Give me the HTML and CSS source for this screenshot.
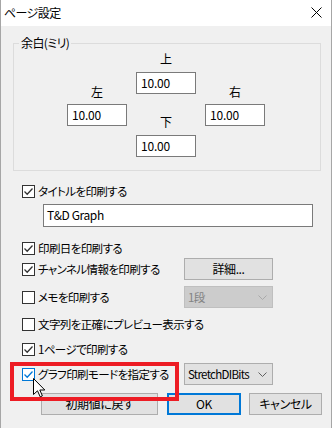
FILE: index.html
```html
<!DOCTYPE html>
<html lang="ja">
<head>
<meta charset="utf-8">
<title>ページ設定</title>
<link rel="stylesheet" href="styles.css">
</head>
<body>
<div class="window">
  <div class="titlebar">
    <span class="title">ページ設定</span>
    <svg class="close" width="11" height="11" viewBox="0 0 11 11"><path d="M0.5 0.5 L10.5 10.5 M10.5 0.5 L0.5 10.5" stroke="#000" stroke-width="1" fill="none"/></svg>
  </div>
  <div class="content">
    <fieldset class="group">
      <legend>余白(ミリ)</legend>
      <div class="margins">
        <div class="col side"><span class="lbl">左</span><div class="field">10.00</div></div>
        <div class="col mid"><span class="lbl">上</span><div class="field">10.00</div><span class="lbl lbl-low">下</span><div class="field">10.00</div></div>
        <div class="col side"><span class="lbl">右</span><div class="field">10.00</div></div>
      </div>
    </fieldset>

    <div class="row r-title"><span class="cb checked"><svg viewBox="0 0 11 11"><path d="M1.5 5.5 L4.2 8.2 L9.5 2.5" /></svg></span><span class="txt">タイトルを印刷する</span></div>
    <div class="textbox">T&amp;D Graph</div>
    <div class="row r-date"><span class="cb checked"><svg viewBox="0 0 11 11"><path d="M1.5 5.5 L4.2 8.2 L9.5 2.5" /></svg></span><span class="txt">印刷日を印刷する</span></div>
    <div class="row wide r-ch"><div class="lab"><span class="cb checked"><svg viewBox="0 0 11 11"><path d="M1.5 5.5 L4.2 8.2 L9.5 2.5" /></svg></span><span class="txt">チャンネル情報を印刷する</span></div><div class="btn detail">詳細...</div></div>
    <div class="row wide r-memo"><div class="lab"><span class="cb"></span><span class="txt">メモを印刷する</span></div><div class="select disabled"><span>1段</span><svg class="chev" width="9" height="5" viewBox="0 0 9 5"><path d="M0.5 0.5 L4.5 4.5 L8.5 0.5"/></svg></div></div>
    <div class="row r-prev"><span class="cb"></span><span class="txt">文字列を正確にプレビュー表示する</span></div>
    <div class="row r-one"><span class="cb checked"><svg viewBox="0 0 11 11"><path d="M1.5 5.5 L4.2 8.2 L9.5 2.5" /></svg></span><span class="txt">1ページで印刷する</span></div>
    <div class="row wide r-graph"><div class="lab"><span class="cb checked hover"><svg viewBox="0 0 11 11"><path d="M1.5 5.5 L4.2 8.2 L9.5 2.5" /></svg></span><span class="txt">グラフ印刷モードを指定する</span></div><div class="select"><span>StretchDIBits</span><svg class="chev" width="9" height="5" viewBox="0 0 9 5"><path d="M0.5 0.5 L4.5 4.5 L8.5 0.5"/></svg></div></div>
    <div class="buttons">
      <div class="btn reset">初期値に戻す</div>
      <div class="btn ok">OK</div>
      <div class="btn cancel">キャンセル</div>
    </div>
  </div>
  <div class="highlight"></div>
  <svg class="cursor" width="13" height="20" viewBox="0 0 13 20"><path d="M0.5 0.5 L0.5 16.5 L4.5 12.8 L7.2 18.8 L9.4 17.8 L6.8 12 L11.8 12 Z" fill="#fff" stroke="#000" stroke-width="1" stroke-linejoin="miter"/></svg>
</div>
</body>
</html>
```

FILE: styles.css
```css
* { box-sizing: border-box; }
html, body { margin: 0; padding: 0; }
body {
  font-family: "Noto Sans CJK JP", "Noto Sans", sans-serif;
  font-size: 11.5px;
  letter-spacing: -0.6px;
  font-feature-settings: "palt";
  color: #000;
  background: #f0f0f0;
}
.window {
  position: relative;
  width: 332px;
  height: 428px;
  border-left: 1px solid #a6a6a6;
  border-right: 1px solid #a6a6a6;
  display: flex;
  flex-direction: column;
  overflow: hidden;
}
.titlebar {
  height: 26px;
  background: #fff;
  display: flex;
  align-items: center;
  justify-content: space-between;
  padding: 0 9px 1px 3px;
  flex: none;
}
.title { line-height: 14px; font-size: 12px; }
.close { display: block; margin-top: -1px; }
.content {
  flex: 1;
  background: #f0f0f0;
  display: flex;
  flex-direction: column;
}
.group {
  margin: 10px 10px 0 12px;
  padding: 2px 0 13px 0;
  border: 1px solid #dcdcdc;
  min-width: 0;
}
.group legend {
  margin-left: 5px;
  padding: 0 2px;
  line-height: 14px;
  font-size: 12px;
}
.margins {
  display: flex;
  gap: 9px;
  padding-left: 53px;
}
.col { display: flex; flex-direction: column; width: 60px; }
.side { padding-top: 33px; }
.lbl {
  display: block;
  text-align: center;
  line-height: 14px;
  height: 14px;
  margin-bottom: 6px;
  font-size: 12px;
  letter-spacing: 0;
}
.side .lbl { margin-bottom: 5px; }
.lbl-low { margin-top: 21px; }
.field {
  height: 22px;
  background: #fff;
  border: 1px solid #7a7a7a;
  padding: 0 0 0 4px;
  line-height: 19px;
  font-size: 12px;
  letter-spacing: -0.2px;
}
.row {
  display: flex;
  align-items: center;
  height: 20px;
  padding-left: 21px;
}
.row.wide {
  display: grid;
  grid-template-columns: 162px 89px;
  height: 22px;
}
.lab { display: flex; align-items: center; }
.cb {
  width: 13px;
  height: 13px;
  border: 1px solid #333;
  background: #fff;
  flex: none;
  display: block;
}
.cb svg { display: block; width: 11px; height: 11px; }
.cb svg path { fill: none; stroke: #333; stroke-width: 1.3; }
.cb.hover { border-color: #0078d7; }
.cb.hover svg path { stroke: #0078d7; }
.txt { margin-left: 3px; line-height: 14px; white-space: nowrap; }
.r-title { margin-top: 10px; }
.textbox {
  margin: 3px 0 0 42px;
  width: 270px;
  height: 23px;
  background: #fff;
  border: 1px solid #7a7a7a;
  padding-left: 3px;
  line-height: 20px;
  font-size: 12px;
  letter-spacing: -0.4px;
}
.r-date { margin-top: 11px; }
.r-ch { margin-top: 0; }
.r-memo { margin-top: 6px; }
.r-prev { margin-top: 6px; }
.r-one { margin-top: 5px; }
.r-graph { margin-top: 4px; }
.btn {
  height: 22px;
  background: #e1e1e1;
  border: 1px solid #adadad;
  text-align: center;
  line-height: 20px;
  font-size: 12px;
  letter-spacing: -0.4px;
}
.select {
  height: 22px;
  background: #e1e1e1;
  border: 1px solid #adadad;
  display: flex;
  align-items: center;
  justify-content: space-between;
  padding: 0 5px 0 3px;
  line-height: 20px;
  font-size: 11.5px;
  letter-spacing: -0.7px;
}
.chev path { fill: none; stroke: #606060; stroke-width: 1; }
.select.disabled { background: #cccccc; border-color: #bfbfbf; color: #838383; }
.select.disabled .chev path { stroke: #a9a9a9; }
.buttons {
  display: flex;
  gap: 9px;
  padding-left: 40px;
  margin-top: 8px;
}
.reset { width: 117px; }
.ok { width: 74px; border: 2px solid #0078d7; line-height: 18px; margin-right: -1px; }
.cancel { width: 73px; }
.highlight {
  position: absolute;
  left: 9px;
  top: 362px;
  width: 169px;
  height: 39px;
  border: 4px solid #ed1c24;
  pointer-events: none;
}
.cursor {
  position: absolute;
  left: 32px;
  top: 378px;
  display: block;
}
```
